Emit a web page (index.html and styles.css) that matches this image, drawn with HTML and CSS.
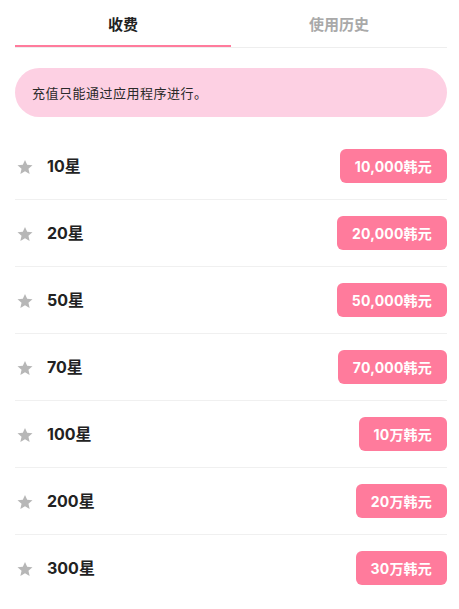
FILE: index.html
```html
<!DOCTYPE html>
<html lang="zh">
<head>
<meta charset="utf-8">
<link rel="stylesheet" href="styles.css">
</head>
<body>
<div class="page">
  <div class="tabs">
    <div class="tab active">收费</div>
    <div class="tab">使用历史</div>
  </div>
  <div class="notice">充值只能通过应用程序进行。</div>
  <ul class="list">
    <li class="row"><span class="name"><svg class="star" viewBox="0 0 24 24"><path d="M12 2.5l2.9 6.6 7.1.6-5.4 4.7 1.6 7-6.2-3.7-6.2 3.7 1.6-7L2 9.7l7.1-.6z"/></svg>10星</span><button class="price">10,000韩元</button></li>
    <li class="row"><span class="name"><svg class="star" viewBox="0 0 24 24"><path d="M12 2.5l2.9 6.6 7.1.6-5.4 4.7 1.6 7-6.2-3.7-6.2 3.7 1.6-7L2 9.7l7.1-.6z"/></svg>20星</span><button class="price">20,000韩元</button></li>
    <li class="row"><span class="name"><svg class="star" viewBox="0 0 24 24"><path d="M12 2.5l2.9 6.6 7.1.6-5.4 4.7 1.6 7-6.2-3.7-6.2 3.7 1.6-7L2 9.7l7.1-.6z"/></svg>50星</span><button class="price">50,000韩元</button></li>
    <li class="row"><span class="name"><svg class="star" viewBox="0 0 24 24"><path d="M12 2.5l2.9 6.6 7.1.6-5.4 4.7 1.6 7-6.2-3.7-6.2 3.7 1.6-7L2 9.7l7.1-.6z"/></svg>70星</span><button class="price">70,000韩元</button></li>
    <li class="row"><span class="name"><svg class="star" viewBox="0 0 24 24"><path d="M12 2.5l2.9 6.6 7.1.6-5.4 4.7 1.6 7-6.2-3.7-6.2 3.7 1.6-7L2 9.7l7.1-.6z"/></svg>100星</span><button class="price">10万韩元</button></li>
    <li class="row"><span class="name"><svg class="star" viewBox="0 0 24 24"><path d="M12 2.5l2.9 6.6 7.1.6-5.4 4.7 1.6 7-6.2-3.7-6.2 3.7 1.6-7L2 9.7l7.1-.6z"/></svg>200星</span><button class="price">20万韩元</button></li>
    <li class="row"><span class="name"><svg class="star" viewBox="0 0 24 24"><path d="M12 2.5l2.9 6.6 7.1.6-5.4 4.7 1.6 7-6.2-3.7-6.2 3.7 1.6-7L2 9.7l7.1-.6z"/></svg>300星</span><button class="price">30万韩元</button></li>
  </ul>
</div>
</body>
</html>
```
FILE: styles.css
```css
* { box-sizing: border-box; }
html, body { margin: 0; padding: 0; background: #fff; }
body {
  font-family: "Inter", "Noto Sans CJK SC", sans-serif;
  color: #222;
}
.page { padding: 0 12px 0 15px; }
.tabs {
  display: flex;
  border-bottom: 1px solid #eeeeee;
}
.tab {
  flex: 1;
  height: 47px;
  display: flex;
  align-items: center;
  justify-content: center;
  font-size: 15px;
  font-weight: 700;
  color: #a9a9a9;
  border-bottom: 2px solid transparent;
  padding-top: 1px;
}
.tab.active {
  color: #222;
  border-bottom-color: #ff7b9c;
}
.notice {
  margin-top: 20px;
  height: 49px;
  border-radius: 25px;
  background: #fdd0e3;
  display: flex;
  align-items: center;
  padding-left: 17px;
  font-size: 13px;
  color: #2a2a2a;
  letter-spacing: 0.5px;
}
.list {
  list-style: none;
  margin: 16px 0 0;
  padding: 0;
}
.row {
  display: flex;
  align-items: center;
  justify-content: space-between;
  padding: 16px 0;
  border-bottom: 1px solid #f0f0f0;
}
.row:last-child { border-bottom: none; }
.name {
  display: flex;
  align-items: center;
  font-size: 16px;
  font-weight: 700;
  color: #222;
  padding-bottom: 2px;
}
.star {
  width: 18px;
  height: 18px;
  fill: #b7b7b7;
  margin: 4px 13px 0 1px;
}
.price {
  height: 34px;
  padding: 0 15px;
  border: none;
  border-radius: 6px;
  background: #ff7b9c;
  color: #fff;
  font-family: "Inter", "Noto Sans CJK SC", sans-serif;
  font-size: 14px;
  font-weight: 700;
  letter-spacing: 0.2px;
}
```
